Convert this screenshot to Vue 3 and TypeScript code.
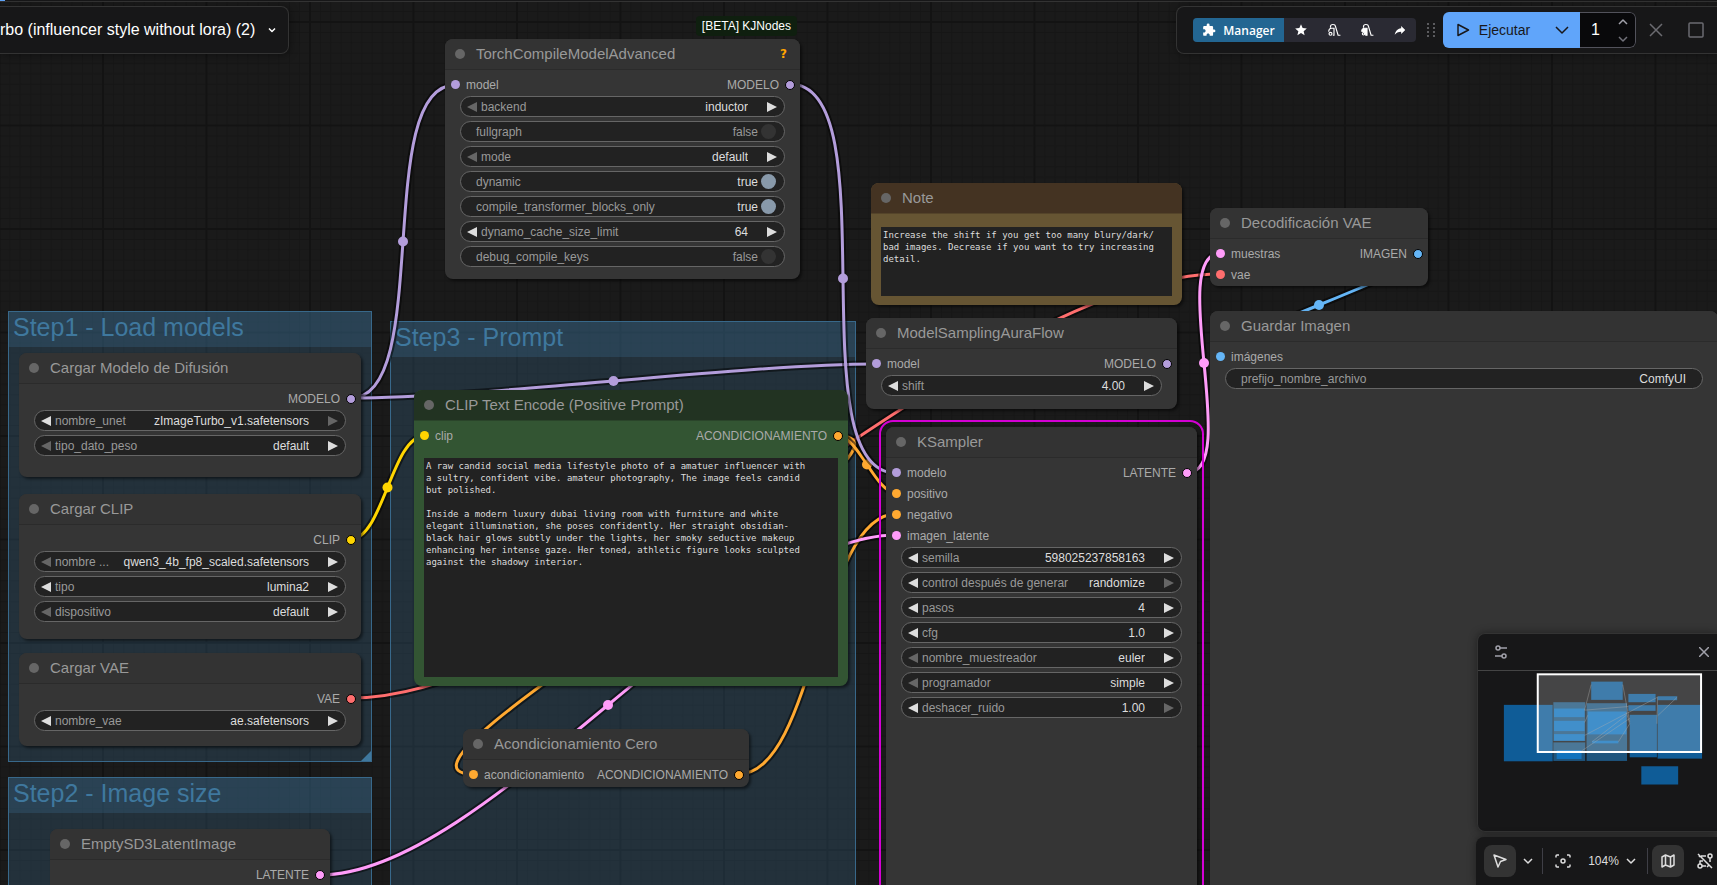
<script setup lang="ts">
interface Slot {
  label: string
  type: string
}
interface Widget {
  kind: 'combo' | 'number' | 'toggle' | 'text'
  label: string
  value: string
  prev?: boolean
  next?: boolean
}
interface GraphNode {
  id: string
  title: string
  x: number
  y: number
  w: number
  h: number
  theme?: string
  selected?: boolean
  badge?: string
  help?: boolean
  inputs: Slot[]
  outputs: Slot[]
  widgets: Widget[]
  text?: string
}

const combo = (label: string, value: string, prev = true, next = true): Widget => ({ kind: 'combo', label, value, prev, next })
const num = (label: string, value: string, prev = true, next = true): Widget => ({ kind: 'number', label, value, prev, next })
const toggle = (label: string, on: boolean): Widget => ({ kind: 'toggle', label, value: on ? 'true' : 'false' })

const groups = [
  { title: 'Step1 - Load models', x: 8, y: 311, w: 364, h: 451, handle: true },
  { title: 'Step2 - Image size', x: 8, y: 777, w: 364, h: 260, handle: false },
  { title: 'Step3 - Prompt', x: 390, y: 321, w: 466, h: 720, handle: false },
]

const promptText = `A raw candid social media lifestyle photo of a amatuer influencer with
a sultry, confident vibe. amateur photography, The image feels candid
but polished.

Inside a modern luxury dubai living room with furniture and white
elegant illumination, she poses confidently. Her straight obsidian-
black hair glows subtly under the lights, her smoky seductive makeup
enhancing her intense gaze. Her toned, athletic figure looks sculpted
against the shadowy interior.`

const noteText = `Increase the shift if you get too many blury/dark/
bad images. Decrease if you want to try increasing
detail.`

const nodes: GraphNode[] = [
  {
    id: 'torch', title: 'TorchCompileModelAdvanced', x: 445, y: 39, w: 355, h: 240,
    badge: '[BETA] KJNodes', help: true,
    inputs: [{ label: 'model', type: 'model' }],
    outputs: [{ label: 'MODELO', type: 'model' }],
    widgets: [
      combo('backend', 'inductor', false), toggle('fullgraph', false), combo('mode', 'default', false),
      toggle('dynamic', true), toggle('compile_transformer_blocks_only', true),
      num('dynamo_cache_size_limit', '64'), toggle('debug_compile_keys', false),
    ],
  },
  {
    id: 'unet', title: 'Cargar Modelo de Difusión', x: 19, y: 353, w: 342, h: 124,
    inputs: [], outputs: [{ label: 'MODELO', type: 'model' }],
    widgets: [combo('nombre_unet', 'zImageTurbo_v1.safetensors', true, false), combo('tipo_dato_peso', 'default', false)],
  },
  {
    id: 'clip', title: 'Cargar CLIP', x: 19, y: 494, w: 342, h: 145,
    inputs: [], outputs: [{ label: 'CLIP', type: 'clip' }],
    widgets: [
      combo('nombre ...', 'qwen3_4b_fp8_scaled.safetensors', false), combo('tipo', 'lumina2'),
      combo('dispositivo', 'default', false),
    ],
  },
  {
    id: 'vae', title: 'Cargar VAE', x: 19, y: 653, w: 342, h: 93,
    inputs: [], outputs: [{ label: 'VAE', type: 'vae' }],
    widgets: [combo('nombre_vae', 'ae.safetensors')],
  },
  {
    id: 'latent', title: 'EmptySD3LatentImage', x: 50, y: 829, w: 280, h: 140,
    inputs: [], outputs: [{ label: 'LATENTE', type: 'latent' }], widgets: [],
  },
  {
    id: 'zero', title: 'Acondicionamiento Cero', x: 463, y: 729, w: 286, h: 58,
    inputs: [{ label: 'acondicionamiento', type: 'cond' }],
    outputs: [{ label: 'ACONDICIONAMIENTO', type: 'cond' }], widgets: [],
  },
  {
    id: 'encode', title: 'CLIP Text Encode (Positive Prompt)', x: 414, y: 390, w: 434, h: 296, theme: 'green',
    inputs: [{ label: 'clip', type: 'clip' }],
    outputs: [{ label: 'ACONDICIONAMIENTO', type: 'cond' }], widgets: [], text: promptText,
  },
  {
    id: 'note', title: 'Note', x: 871, y: 183, w: 311, h: 122, theme: 'amber',
    inputs: [], outputs: [], widgets: [], text: noteText,
  },
  {
    id: 'aura', title: 'ModelSamplingAuraFlow', x: 866, y: 318, w: 311, h: 91,
    inputs: [{ label: 'model', type: 'model' }],
    outputs: [{ label: 'MODELO', type: 'model' }],
    widgets: [num('shift', '4.00')],
  },
  {
    id: 'sampler', title: 'KSampler', x: 886, y: 427, w: 311, h: 500, selected: true,
    inputs: [
      { label: 'modelo', type: 'model' }, { label: 'positivo', type: 'cond' },
      { label: 'negativo', type: 'cond' }, { label: 'imagen_latente', type: 'latent' },
    ],
    outputs: [{ label: 'LATENTE', type: 'latent' }],
    widgets: [
      num('semilla', '598025237858163'), combo('control después de generar', 'randomize', true, false),
      num('pasos', '4'), num('cfg', '1.0'), combo('nombre_muestreador', 'euler', false),
      combo('programador', 'simple', false), num('deshacer_ruido', '1.00', true, false),
    ],
  },
  {
    id: 'decode', title: 'Decodificación VAE', x: 1210, y: 208, w: 218, h: 78,
    inputs: [{ label: 'muestras', type: 'latent' }, { label: 'vae', type: 'vae' }],
    outputs: [{ label: 'IMAGEN', type: 'image' }], widgets: [],
  },
  {
    id: 'save', title: 'Guardar Imagen', x: 1210, y: 311, w: 508, h: 620,
    inputs: [{ label: 'imágenes', type: 'image' }], outputs: [],
    widgets: [{ kind: 'text', label: 'prefijo_nombre_archivo', value: 'ComfyUI' }],
  },
]

const linkEnds: [string, number, number, number, number][] = [
  ['vae', 351, 698, 1220, 274],
  ['model', 351, 398, 455, 85],
  ['model', 351, 398, 876, 364],
  ['clip', 351, 539, 424, 436],
  ['cond', 838, 436, 473, 774],
  ['cond', 739, 774, 896, 514],
  ['cond', 838, 436, 896, 493],
  ['model', 790, 84, 896, 473],
  ['latent', 320, 875, 896, 535],
  ['latent', 1187, 473, 1221, 253],
  ['image', 1418, 253, 1220, 357],
]

const links = linkEnds.map(([type, x1, y1, x2, y2]) => {
  const bend = Math.hypot(x2 - x1, y2 - y1) / 4
  return {
    type,
    d: `M${x1},${y1} C${x1 + bend},${y1} ${x2 - bend},${y2} ${x2},${y2}`,
    mx: (x1 + x2) / 2,
    my: (y1 + y2) / 2,
  }
})

const box = (b: { x: number; y: number; w: number; h: number }) => ({
  left: `${b.x}px`, top: `${b.y}px`, width: `${b.w}px`, height: `${b.h}px`,
})
</script>

<template>
  <div class="app">
    <main class="canvas">
      <svg class="grid" aria-hidden="true">
        <defs>
          <pattern id="grid-tile" width="100" height="100" patternUnits="userSpaceOnUse" patternTransform="translate(-0.5 22) scale(1.035)">
            <path d="M10,0V100M20,0V100M30,0V100M40,0V100M50,0V100M60,0V100M70,0V100M80,0V100M90,0V100M0,10H100M0,20H100M0,30H100M0,40H100M0,50H100M0,60H100M0,70H100M0,80H100M0,90H100" class="grid-minor" />
            <path d="M0,0V100M100,0V100M0,0H100M0,100H100" class="grid-major" />
          </pattern>
        </defs>
        <rect width="100%" height="100%" fill="url(#grid-tile)" />
      </svg>

      <section v-for="g in groups" :key="g.title" class="group" :style="box(g)">
        <h2 class="group-title">{{ g.title }}</h2>
        <span v-if="g.handle" class="group-handle"></span>
      </section>

      <svg class="links" aria-hidden="true">
        <g v-for="(l, i) in links" :key="i" :class="`link t-${l.type}`">
          <path :d="l.d" class="link-shade" />
          <path :d="l.d" class="link-line" />
          <circle :cx="l.mx" :cy="l.my" r="5" />
        </g>
      </svg>

      <article v-for="n in nodes" :key="n.id" class="node" :class="[n.theme, { selected: n.selected }]" :style="box(n)">
        <span v-if="n.badge" class="badge">{{ n.badge }}</span>
        <header class="node-head">
          <span class="node-dot"></span>
          <h3 class="node-title">{{ n.title }}</h3>
          <span v-if="n.help" class="help">?</span>
        </header>
        <div class="node-body">
          <div v-if="n.inputs.length || n.outputs.length" class="slots">
            <ul class="slot-list">
              <li v-for="s in n.inputs" :key="s.label" class="slot"><i class="pin" :class="`t-${s.type}`"></i>{{ s.label }}</li>
            </ul>
            <ul class="slot-list">
              <li v-for="s in n.outputs" :key="s.label" class="slot">{{ s.label }}<i class="pin out" :class="`t-${s.type}`"></i></li>
            </ul>
          </div>
          <div v-if="n.widgets.length" class="widgets">
            <div v-for="w in n.widgets" :key="w.label" class="widget" :class="w.kind">
              <button v-if="w.kind === 'combo' || w.kind === 'number'" class="arrow" :disabled="!w.prev" :aria-label="`${w.label} anterior`">
                <svg viewBox="0 0 10 10"><path d="M10,0V10L0,5Z" /></svg>
              </button>
              <label class="w-label" :for="`${n.id}-${w.label}`">{{ w.label }}</label>
              <select v-if="w.kind === 'combo'" :id="`${n.id}-${w.label}`" class="w-value">
                <option>{{ w.value }}</option>
              </select>
              <template v-else-if="w.kind === 'toggle'">
                <span class="w-state" :class="{ on: w.value === 'true' }">{{ w.value }}</span>
                <input :id="`${n.id}-${w.label}`" class="w-check" type="checkbox" :checked="w.value === 'true'" />
              </template>
              <input v-else :id="`${n.id}-${w.label}`" class="w-value" type="text" :value="w.value" />
              <button v-if="w.kind === 'combo' || w.kind === 'number'" class="arrow" :disabled="!w.next" :aria-label="`${w.label} siguiente`">
                <svg viewBox="0 0 10 10"><path d="M0,0V10L10,5Z" /></svg>
              </button>
            </div>
          </div>
          <textarea v-if="n.text" class="node-text" :aria-label="n.title" :value="n.text" spellcheck="false"></textarea>
        </div>
      </article>
    </main>

    <div class="strip"><span class="strip-mark"></span></div>
    <header class="topbar">
      <button class="crumb">
        <span>rbo (influencer style without lora) (2)</span>
        <svg class="i8" viewBox="0 0 8 8"><path d="M1,2.5 4,5.5 7,2.5" class="stroke" /></svg>
      </button>
      <div class="actions">
        <div class="tools">
          <button class="manager">
            <svg class="i14" viewBox="0 0 24 24"><path fill="currentColor" d="M20.5,11H19V7C19,5.89 18.1,5 17,5H13V3.5A2.5,2.5 0 0,0 10.5,1A2.5,2.5 0 0,0 8,3.5V5H4A2,2 0 0,0 2,7V10.8H3.5C5,10.8 6.2,12 6.2,13.5C6.2,15 5,16.2 3.5,16.2H2V20A2,2 0 0,0 4,22H7.8V20.5C7.8,19 9,17.8 10.5,17.8C12,17.8 13.2,19 13.2,20.5V22H17A2,2 0 0,0 19,20V16H20.5A2.5,2.5 0 0,0 23,13.5A2.5,2.5 0 0,0 20.5,11Z" /></svg>
            Manager
          </button>
          <button class="tool" aria-label="Favoritos">
            <svg class="i14" viewBox="0 0 24 24"><path fill="currentColor" d="M12,17.27L18.18,21L16.54,13.97L22,9.24L14.81,8.62L12,2L9.19,8.62L2,9.24L7.45,13.97L5.82,21L12,17.27Z" /></svg>
          </button>
          <button class="tool" aria-label="Descargar modelos">
            <svg class="i14" viewBox="0 0 24 24" fill="none" stroke="currentColor" stroke-width="2">
              <path d="M6,8V6C6,1.500 14,1.500 14.500,6L19,21H23M3,15C3,11 5,9 8,9H12V21H10" /><circle cx="6" cy="18.500" r="2.500" />
            </svg>
          </button>
          <button class="tool" aria-label="Liberar memoria">
            <svg class="i14" viewBox="0 0 24 24" fill="none" stroke="currentColor" stroke-width="2">
              <path d="M6,8V6C6,1.500 14,1.500 14.500,6L19,21H23" /><path fill="currentColor" d="M3,14C3,11 5,9 8,9H12V21H10C10,16 7,14 3,14Z" /><circle cx="6" cy="18.500" r="2" />
            </svg>
          </button>
          <button class="tool" aria-label="Compartir">
            <svg class="i14" viewBox="0 0 24 24"><path fill="currentColor" d="M21,12L14,5V9C7,10 4,15 3,20C5.5,16.500 9,14.900 14,14.900V19L21,12Z" /></svg>
          </button>
        </div>
        <svg class="grip" viewBox="0 0 10 14">
          <path d="M1,1h2M7,1h2M1,5h2M7,5h2M1,9h2M7,9h2M1,13h2M7,13h2" stroke="#a0a0a4" stroke-width="1" />
        </svg>
        <div class="run-group">
          <button class="run">
            <svg class="i14" viewBox="0 0 14 14"><path d="M2,1.500V12.500L12.500,7Z" class="stroke" /></svg>
            Ejecutar
          </button>
          <button class="run-more" aria-label="Opciones de ejecución">
            <svg class="i14" viewBox="0 0 14 14"><path d="M1,4 7,10 13,4" class="stroke" /></svg>
          </button>
          <div class="count">
            <input type="text" value="1" aria-label="Cantidad" />
            <div class="steps">
              <button aria-label="Aumentar"><svg class="i10" viewBox="0 0 10 10"><path d="M1,7 5,3 9,7" class="stroke" /></svg></button>
              <button class="dim" aria-label="Disminuir"><svg class="i10" viewBox="0 0 10 10"><path d="M1,3 5,7 9,3" class="stroke" /></svg></button>
            </div>
          </div>
        </div>
        <button class="ghost" aria-label="Cancelar"><svg class="i16" viewBox="0 0 16 16"><path d="M2,2 14,14M14,2 2,14" class="stroke" /></svg></button>
        <button class="ghost" aria-label="Detener"><svg class="i16" viewBox="0 0 16 16"><rect x="1" y="1" width="14" height="14" rx="1" class="stroke" /></svg></button>
      </div>
    </header>

    <aside class="dock">
      <section class="minimap">
        <header class="map-head">
          <button class="plain" aria-label="Ajustes del minimapa">
            <svg class="i14" viewBox="0 0 14 14"><g class="stroke"><circle cx="4" cy="3" r="2" /><path d="M6,3H13M1,11H8" /><circle cx="10" cy="11" r="2" /></g></svg>
          </button>
          <button class="plain" aria-label="Cerrar minimapa">
            <svg class="i10" viewBox="0 0 10 10"><path d="M0,0 10,10M10,0 0,10" class="stroke" /></svg>
          </button>
        </header>
        <svg class="map" viewBox="30 137 720 483" aria-hidden="true">
          <g fill="#0f5c97">
            <rect x="108" y="239" width="147" height="170" /><rect x="371" y="169" width="95" height="55" />
            <rect x="483" y="206" width="82" height="25" /><rect x="483" y="240" width="82" height="17" />
            <rect x="571" y="213" width="59" height="12" /><rect x="571" y="239" width="134" height="162" />
            <rect x="487" y="269" width="82" height="128" /><rect x="522" y="424" width="111" height="55" />
          </g>
          <g fill="#1f557d">
            <rect x="257" y="231" width="96" height="117" /><rect x="257" y="352" width="96" height="56" />
            <rect x="357" y="234" width="122" height="174" />
          </g>
          <g fill="#1273bd">
            <rect x="259" y="250" width="92" height="26" /><rect x="259" y="287" width="92" height="31" />
            <rect x="259" y="327" width="92" height="20" /><rect x="267" y="375" width="75" height="27" />
            <rect x="361" y="259" width="116" height="69" /><rect x="374" y="347" width="79" height="8" />
          </g>
          <path fill="none" stroke="#999" stroke-opacity=".4" stroke-width="3" d="M351,255 371,178M351,255 483,244M351,292 361,270M351,331 571,216M477,270 374,350M477,262 487,296M453,350 487,296M342,378 487,280M466,178 487,290M569,296 571,216M630,216 571,272" />
          <rect x="210" y="147" width="492" height="234" fill="#fff" fill-opacity=".2" stroke="#fff" stroke-width="6" />
        </svg>
      </section>
      <nav class="controls">
        <button class="cell active" aria-label="Seleccionar"><svg class="i16" viewBox="0 0 16 16"><path d="M2,2 6,14 8.500,8.500 14,6.500Z" class="stroke" /></svg></button>
        <button class="more" aria-label="Modo"><svg class="i10" viewBox="0 0 10 10"><path d="M1,3 5,7 9,3" class="stroke" /></svg></button>
        <span class="rule"></span>
        <button class="cell" aria-label="Ajustar vista">
          <svg class="i16" viewBox="0 0 16 16"><path d="M1,4.500V3Q1,2 2,2H4M12,2H14Q15,2 15,3V4.500M15,11.500V13Q15,14 14,14H12M4,14H2Q1,14 1,13V11.500" class="stroke" /><circle cx="8" cy="8" r="2" class="stroke" /></svg>
        </button>
        <button class="zoom">104%<svg class="i10" viewBox="0 0 10 10"><path d="M1,3 5,7 9,3" class="stroke" /></svg></button>
        <span class="rule"></span>
        <button class="cell active" aria-label="Minimapa">
          <svg class="i16" viewBox="0 0 16 16"><path d="M2,4 5.500,2 10.500,4 14,2V12L10.500,14 5.500,12 2,14ZM5.500,2V12M10.500,4V14" class="stroke" /></svg>
        </button>
        <button class="cut" aria-label="Ocultar enlaces">
          <svg class="i16" viewBox="0 0 16 16"><g class="stroke"><path d="M1,1 15,15M4,3H9M13,5V9M3,11V8H6M5,13H9" /><circle cx="13" cy="3" r="2" /><circle cx="3" cy="13" r="2" /><path d="M10,14L12,12M2,4L3,3" /></g></svg>
        </button>
      </nav>
    </aside>
  </div>
</template>

<style>
body {
  background: #1a1a1a;
}
</style>

<style scoped>
.app {
  position: relative;
  height: 100vh;
  overflow: hidden;
  background: #1a1a1a;
  font-family: "Liberation Sans", Arial, sans-serif;
  display: flex;
  flex-direction: column;
}
.app * {
  box-sizing: border-box;
}
button,
input,
select,
textarea {
  font: inherit;
  color: inherit;
  background: none;
  border: 0;
  margin: 0;
  padding: 0;
  outline: none;
}
button {
  display: flex;
  align-items: center;
  justify-content: center;
}
svg {
  display: block;
  flex: none;
}
.stroke {
  fill: none;
  stroke: currentColor;
  stroke-width: 1.5;
  stroke-linejoin: round;
}
.i8 { width: 8px; height: 8px; }
.i10 { width: 10px; height: 10px; }
.i14 { width: 14px; height: 14px; }
.i16 { width: 16px; height: 16px; }

/* Graph canvas */
.canvas {
  position: absolute;
  inset: 0;
  overflow: hidden;
}
.grid,
.links {
  position: absolute;
  inset: 0;
  width: 100%;
  height: 100%;
}
.grid-minor {
  stroke: #161616;
  stroke-width: 1;
}
.grid-major {
  stroke: #131313;
  stroke-width: 2;
}
.t-model { --c: #b39ddb; }
.t-clip { --c: #ffd500; }
.t-vae { --c: #ff6e6e; }
.t-cond { --c: #ffa931; }
.t-latent { --c: #ff9cf9; }
.t-image { --c: #64b5f6; }
.link circle {
  fill: var(--c);
}
.link path {
  fill: none;
}
.link-shade {
  stroke: rgba(0, 0, 0, 0.5);
  stroke-width: 7;
}
.link-line {
  stroke: var(--c);
  stroke-width: 3;
}

.group {
  position: absolute;
  border: 1px solid #38688a;
  background: rgba(63, 120, 158, 0.25);
}
.group-title {
  margin: 0;
  height: 35px;
  padding-left: 4px;
  font-size: 25px;
  line-height: 30px;
  font-weight: 400;
  color: #3f789e;
  background: rgba(63, 120, 158, 0.25);
}
.group-handle {
  position: absolute;
  right: 0;
  bottom: 0;
  width: 10px;
  height: 10px;
  background: #3f789e;
  clip-path: polygon(100% 0, 100% 100%, 0 100%);
}

.node {
  position: absolute;
  display: flex;
  flex-direction: column;
  border-radius: 8px;
  background: #353535;
  box-shadow: 2px 2px 3px rgba(0, 0, 0, 0.5);
  --head: #333;
  --rule: #2b2b2b;
  font-size: 12px;
  color: #aaa;
}
.node.green {
  background: #335533;
  --head: #223322;
  --rule: #2a442a;
}
.node.amber {
  background: #665533;
  --head: #443322;
  --rule: #54442a;
}
.node.selected::before {
  content: "";
  position: absolute;
  inset: -7px;
  border: 2px solid #d400d4;
  border-radius: 14px;
}
.badge {
  position: absolute;
  right: 3px;
  bottom: 100%;
  margin-bottom: 3px;
  height: 20px;
  padding: 0 6px;
  line-height: 20px;
  border-radius: 4px;
  background: #0f1f0f;
  color: #fff;
}
.node-head {
  display: flex;
  align-items: center;
  height: 31px;
  padding: 0 13px 0 10px;
  gap: 11px;
  border-radius: 8px 8px 0 0;
  border-bottom: 1px solid var(--rule);
  background: var(--head);
  flex: none;
}
.node-dot {
  width: 10px;
  height: 10px;
  border-radius: 50%;
  background: #666;
}
.node-title {
  margin: 0;
  flex: 1;
  font-size: 15px;
  line-height: 20px;
  font-weight: 400;
  color: #999;
}
.help {
  font: 700 12px "DejaVu Sans", sans-serif;
  color: #ffa500;
}
.node-body {
  flex: 1;
  min-height: 0;
  display: flex;
  flex-direction: column;
  padding-top: 4px;
}
.slots {
  display: flex;
  justify-content: space-between;
  padding: 0 5px 0 6px;
}
.slot-list {
  list-style: none;
  margin: 0;
  padding: 0;
}
.slot {
  display: flex;
  align-items: center;
  gap: 6px;
  height: 21px;
  line-height: 20px;
}
.pin {
  width: 9px;
  height: 9px;
  border-radius: 50%;
  background: var(--c);
}
.pin.out {
  width: 10px;
  height: 10px;
  border: 1px solid #000;
}
.widgets {
  display: flex;
  flex-direction: column;
  gap: 4px;
  margin-top: 1px;
  padding: 0 15px;
}
.widget {
  display: flex;
  align-items: center;
  height: 21px;
  padding: 0 7px 0 6px;
  border: 1px solid #666;
  border-radius: 11px;
  background: #222;
  color: #999;
}
.arrow {
  width: 10px;
  height: 10px;
  color: #ddd;
}
.arrow:disabled {
  color: #666;
}
.arrow svg {
  width: 10px;
  height: 10px;
  fill: currentColor;
}
.w-label {
  padding-left: 4px;
  white-space: nowrap;
}
.w-value {
  flex: 1;
  min-width: 0;
  height: 19px;
  margin-right: 19px;
  text-align: right;
  text-align-last: right;
  color: #ddd;
  appearance: none;
}
.toggle,
.text {
  padding-left: 11px;
}
.text .w-value {
  margin-right: 9px;
}
.w-state {
  margin-left: auto;
}
.w-state.on {
  color: #ddd;
}
.w-check {
  appearance: none;
  width: 15px;
  height: 15px;
  margin: 0 1px 0 3px;
  border-radius: 50%;
  background: #333;
}
.w-check:checked {
  background: #8899aa;
}
.node-text {
  flex: 1;
  margin: 9px 10px;
  padding: 2px;
  border: 0;
  resize: none;
  overflow: hidden;
  white-space: pre;
  background: #222;
  color: #ddd;
  font: 9px/12px "DejaVu Sans Mono", monospace;
}
.green .node-text {
  margin-top: 12px;
}

/* Top bar */
.strip {
  position: relative;
  height: 2px;
  border-bottom: 1px solid #333;
  background: #171718;
}
.strip-mark {
  display: block;
  width: 5px;
  height: 1px;
  background: #60a5fa;
}
.topbar {
  position: relative;
  display: flex;
  justify-content: space-between;
  align-items: flex-start;
  margin-top: 4px;
}
.crumb {
  height: 48px;
  padding-right: 12px;
  gap: 13px;
  border: 1px solid #333;
  border-left: 0;
  border-radius: 0 8px 8px 0;
  background: #171718;
  color: #fff;
  font-size: 16px;
  box-shadow: 1px 1px 8px rgba(0, 0, 0, 0.4);
}
.actions {
  display: flex;
  align-items: center;
  height: 48px;
  padding: 0 13px 0 16px;
  border: 1px solid #333;
  border-right: 0;
  border-radius: 8px 0 0 8px;
  background: #171718;
  box-shadow: 1px 1px 8px rgba(0, 0, 0, 0.4);
}
.tools {
  display: flex;
  height: 24px;
  border-radius: 4px;
  overflow: hidden;
  background: #2a2a33;
  color: #fff;
}
.manager {
  width: 91px;
  gap: 7px;
  background: #236692;
  font: 600 12px "Open Sans", sans-serif;
}
.tool {
  width: 33px;
}
.grip {
  width: 10px;
  height: 14px;
  margin: 0 7px 0 10px;
}
.run-group {
  display: flex;
  height: 36px;
  border-radius: 6px;
  overflow: hidden;
}
.run {
  width: 100px;
  gap: 9px;
  background: #60a5fa;
  color: #18181b;
  font-size: 14px;
}
.run-more {
  width: 37px;
  background: #60a5fa;
  color: #18181b;
}
.count {
  display: flex;
  width: 56px;
  border: 1px solid #52525b;
  border-left: 0;
  border-radius: 0 6px 6px 0;
  background: #09090b;
  color: #fff;
}
.count input {
  flex: 1;
  min-width: 0;
  text-align: center;
  font-size: 16px;
}
.steps {
  display: flex;
  flex-direction: column;
  justify-content: space-around;
  width: 24px;
  color: #a1a1aa;
}
.steps .dim {
  color: #71717a;
}
.ghost {
  color: #6b6b70;
  margin-left: 12px;
}
.ghost + .ghost {
  margin-left: 24px;
}

/* Minimap and view controls */
.dock {
  position: relative;
  width: 240px;
  margin-top: auto;
  align-self: flex-end;
}
.minimap {
  margin-bottom: 5px;
  border: 1px solid #333;
  border-right: 0;
  border-radius: 8px 0 0 8px;
  background: #171718;
  box-shadow: 0 0 8px rgba(0, 0, 0, 0.4);
}
.map-head {
  display: flex;
  align-items: center;
  justify-content: space-between;
  height: 37px;
  padding: 0 8px 0 16px;
  border-bottom: 1px solid #444;
}
.map {
  width: 100%;
}
.plain {
  color: #a1a1aa;
}
.controls {
  display: flex;
  align-items: center;
  height: 48px;
  margin-left: -1px;
  padding-left: 8px;
  border-radius: 8px 0 0 0;
  background: #171718;
  box-shadow: 0 0 8px rgba(0, 0, 0, 0.4);
  color: #ddd;
}
.cell {
  flex: none;
  width: 32px;
  height: 32px;
  border-radius: 8px;
}
.cell.active {
  background: #333;
}
.more {
  width: 24px;
  height: 32px;
}
.rule {
  width: 1px;
  height: 26px;
  margin: 0 4px 0 2px;
  background: #3f3f46;
}
.zoom {
  width: 66px;
  height: 32px;
  gap: 7px;
  font-size: 12px;
}
.cut {
  flex: 1;
  height: 32px;
  justify-content: flex-end;
  padding-right: 4px;
}
</style>
